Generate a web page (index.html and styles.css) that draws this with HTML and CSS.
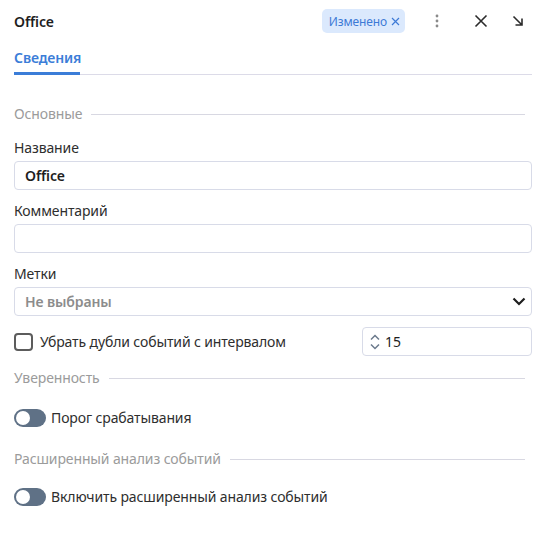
FILE: index.html
```html
<!DOCTYPE html>
<html lang="ru">
<head>
<meta charset="utf-8">
<link rel="stylesheet" href="styles.css">
</head>
<body>
<div class="panel">
  <header class="header">
    <div class="title">Office</div>
    <div class="actions">
      <span class="badge">Изменено
        <svg class="badge-x" width="9" height="9" viewBox="0 0 9 9"><path d="M1 1L8 8M8 1L1 8" stroke="#3d7ad6" stroke-width="1.2" fill="none"/></svg>
      </span>
      <span class="icon kebab">
        <svg width="4" height="14" viewBox="0 0 4 14"><circle cx="2" cy="2" r="1.4" fill="#8a8a8a"/><circle cx="2" cy="7" r="1.4" fill="#8a8a8a"/><circle cx="2" cy="12" r="1.4" fill="#8a8a8a"/></svg>
      </span>
      <span class="icon close">
        <svg width="14" height="14" viewBox="0 0 14 14"><path d="M1.5 1.5L12.5 12.5M12.5 1.5L1.5 12.5" stroke="#2b2b2b" stroke-width="1.6" fill="none"/></svg>
      </span>
      <span class="icon expand">
        <svg width="12" height="12" viewBox="0 0 12 12"><path d="M1.5 1.5L10 10M10 3.5V10H3.5" stroke="#2b2b2b" stroke-width="1.6" fill="none"/></svg>
      </span>
    </div>
  </header>
  <nav class="tabs"><span class="tab active">Сведения</span></nav>

  <div class="content">
    <div class="section"><span>Основные</span></div>

    <label class="label first">Название</label>
    <div class="input"><span class="value bold">Office</span></div>

    <label class="label">Комментарий</label>
    <div class="input"></div>

    <label class="label">Метки</label>
    <div class="input select">
      <span class="placeholder">Не выбраны</span>
      <svg width="14" height="9" viewBox="0 0 14 9"><path d="M1.5 1.5L7 7L12.5 1.5" stroke="#1e1e1e" stroke-width="2.2" fill="none"/></svg>
    </div>

    <div class="row-check">
      <label class="check"><span class="box"></span>Убрать дубли событий с интервалом</label>
      <div class="input number">
        <svg width="10" height="18" viewBox="0 0 10 18"><path d="M1 6.5L5 2.5L9 6.5M1 11.5L5 15.5L9 11.5" stroke="#6b7a8c" stroke-width="1.5" fill="none"/></svg>
        <span class="value">15</span>
      </div>
    </div>

    <div class="section s2"><span>Уверенность</span></div>
    <div class="toggle-row t1"><span class="toggle"><span class="knob"></span></span>Порог срабатывания</div>

    <div class="section s3"><span>Расширенный анализ событий</span></div>
    <div class="toggle-row t2"><span class="toggle"><span class="knob"></span></span>Включить расширенный анализ событий</div>
  </div>
</div>
</body>
</html>
```

FILE: styles.css
```css
* { box-sizing: border-box; }
body {
  margin: 0;
  background: #fff;
  font-family: "Noto Sans", "Open Sans", sans-serif;
  font-size: 14px;
  letter-spacing: -0.12px;
  color: #2a2a2a;
}
.panel {
  padding: 0 23px 0 14px;
}
.header {
  height: 42px;
  display: flex;
  align-items: center;
  justify-content: space-between;
}
.title {
  font-weight: 600;
  font-size: 14px;
  color: #1e1e1e;
}
.actions {
  display: flex;
  align-items: center;
}
.badge {
  display: inline-flex;
  align-items: center;
  gap: 4px;
  height: 24px;
  padding: 0 5px 0 7px;
  background: #dbe9fd;
  color: #3d7ad6;
  border-radius: 5px;
  font-size: 12px;
}
.icon { display: inline-flex; align-items: center; }
.kebab { margin-left: 30px; }
.close { margin-left: 35px; }
.expand { margin-left: 24px; margin-right: 8px; }
.tabs {
  border-bottom: 1px solid #dcdbe8;
  height: 33px;
  display: flex;
  align-items: flex-end;
}
.tab {
  font-weight: 600;
  color: #3b7dd8;
  padding-bottom: 5px;
  border-bottom: 3px solid #3b7dd8;
  margin-bottom: -1px;
  line-height: 19px;
  width: 66px;
}
.content { padding-top: 29px; }
.section {
  display: flex;
  align-items: center;
  gap: 9px;
  color: #9b9b9b;
  margin-right: 7px;
  height: 20px;
  line-height: 20px;
}
.section::after {
  content: "";
  flex: 1;
  height: 1px;
  background: #d8d8e2;
}
.label {
  display: block;
  margin-top: 11px;
  margin-bottom: 3px;
  line-height: 20px;
  color: #2e2e2e;
}
.label.first { margin-top: 14px; }
.input {
  height: 29px;
  border: 1px solid #d8dbe8;
  border-radius: 4px;
  display: flex;
  align-items: center;
  padding: 0 10px;
}
.value { color: #1e1e1e; }
.bold { font-weight: 600; }
.select { justify-content: space-between; padding-right: 5px; }
.placeholder { color: #8c8c8c; font-weight: 600; }
.row-check {
  display: flex;
  align-items: center;
  justify-content: space-between;
  margin-top: 11px;
}
.check {
  display: flex;
  align-items: center;
  gap: 7px;
  color: #2e2e2e;
}
.box {
  width: 19px;
  height: 18px;
  border: 2px solid #5c5c5c;
  border-radius: 4px;
}
.number {
  width: 170px;
  gap: 5px;
  padding-left: 7px;
}
.s2 { margin-top: 12px; }
.s3 { margin-top: 21px; }
.toggle-row {
  display: flex;
  align-items: center;
  gap: 5px;
  line-height: 20px;
  color: #2e2e2e;
}
.t1 { margin-top: 20px; }
.t2 { margin-top: 18px; }
.toggle {
  width: 32px;
  height: 18px;
  border-radius: 9px;
  background: #5f7186;
  position: relative;
}
.knob {
  position: absolute;
  left: 2px;
  top: 2px;
  width: 14px;
  height: 14px;
  border-radius: 50%;
  background: #fff;
}
```
